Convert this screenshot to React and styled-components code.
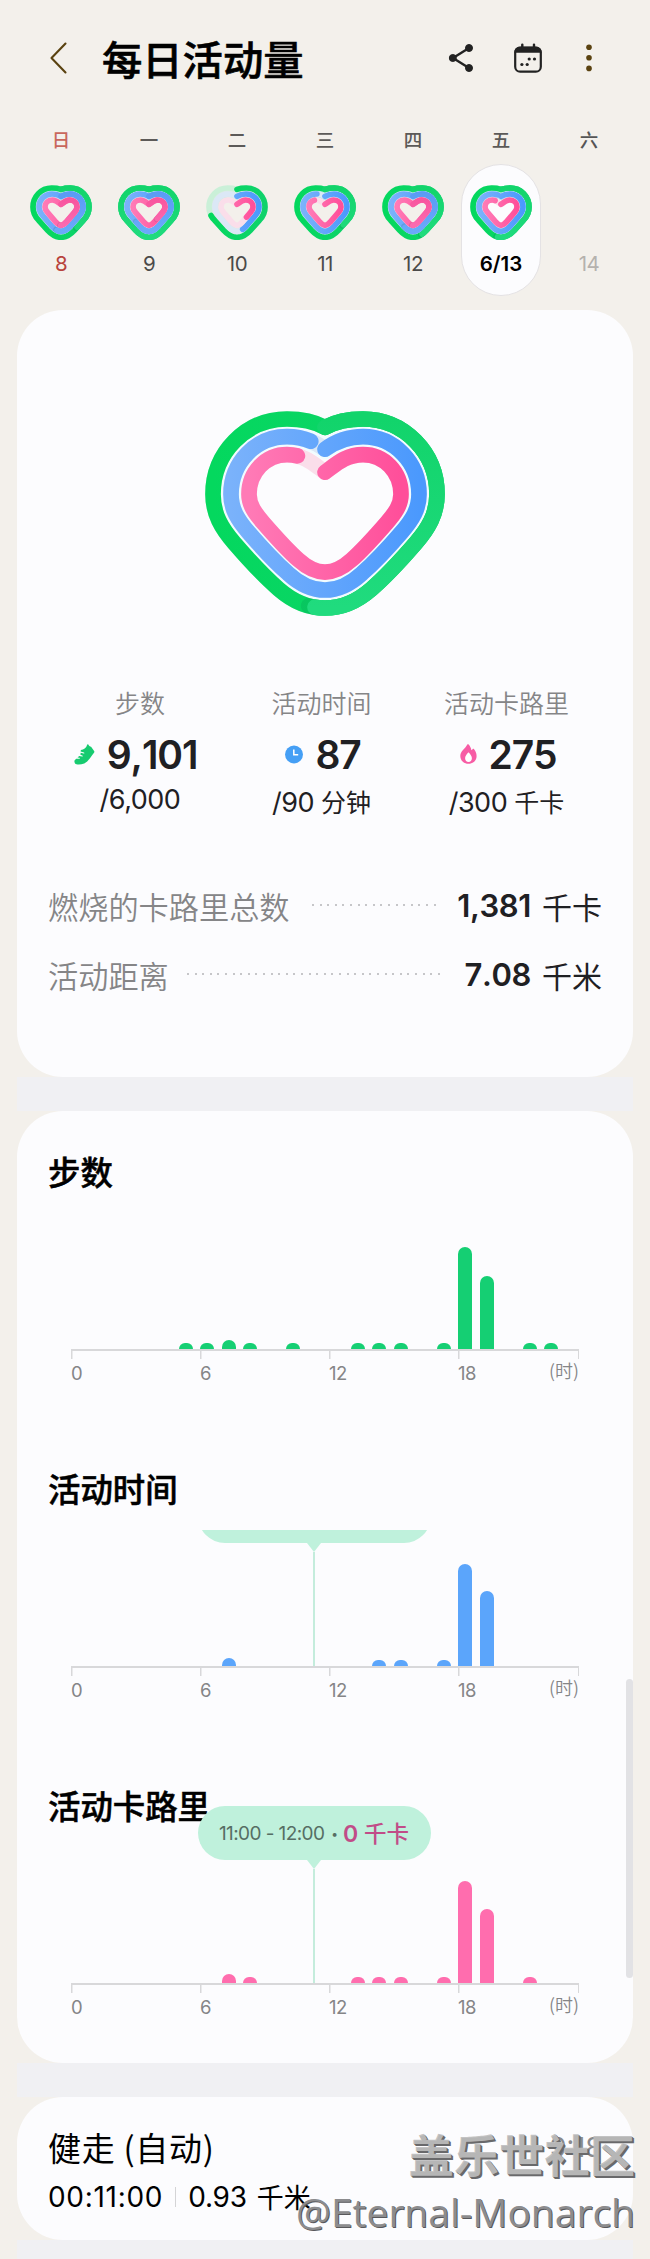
import React from "react";
import styled, { createGlobalStyle } from "styled-components";

const days = [
  { week: "日", date: "8", tone: "sunday", rings: [1.38, 1.53, 1.5] },
  { week: "一", date: "9", rings: [1.99, 1.62, 1.38] },
  { week: "二", date: "10", rings: [0.71, 0.45, 0.36] },
  { week: "三", date: "11", rings: [1.36, 0.93, 0.87] },
  { week: "四", date: "12", rings: [1.44, 1.57, 1.5] },
  { week: "五", date: "6/13", tone: "selected", rings: [1.52, 0.97, 0.92] },
  { week: "六", date: "14", tone: "future" }
];

const charts = [
  {
    title: "步数",
    color: "#15cf73",
    bars: { 5: 6, 6: 6, 7: 9, 8: 6, 10: 6, 13: 6, 14: 6, 15: 6, 17: 6, 18: 102, 19: 73, 21: 6, 22: 6 }
  },
  {
    title: "活动时间",
    color: "#5ba5fb",
    bars: { 7: 8, 14: 6, 15: 6, 17: 6, 18: 102, 19: 75 },
    tip: true,
    clip: true
  },
  {
    title: "活动卡路里",
    color: "#ff6dae",
    bars: { 7: 9, 8: 6, 13: 6, 14: 6, 15: 6, 17: 6, 18: 102, 19: 74, 21: 6 },
    tip: true
  }
];

const bigHeart = {
  viewBox: "46 62 720 616",
  width: 240,
  height: 205,
  stroke: 47,
  shade: 0.1,
  paths: [
    "M406 111C438 94 478 86 520 86C643 86 742 187 742 312C742 372 716 415 678 459C640 503 590 558 545 597C498 638 450 654 406 654C362 654 314 638 267 597C222 558 172 503 134 459C96 415 70 372 70 312C70 187 169 86 292 86C334 86 374 94 406 111",
    "M406 177C440 152 478 139 520 139C613 139 688 216 688 312C688 357 668 389 636 426C600 468 556 516 517 550C480 584 441 600 406 600C371 600 332 584 295 550C256 516 212 468 176 426C144 389 124 357 124 312C124 216 199 139 292 139C334 139 372 152 406 177",
    "M406 246C439 222 468 193 520 193C584 193 634 246 634 312C634 344 617 368 591 398C558 436 520 479 486 509C457 535 432 546 406 546C380 546 355 535 326 509C292 479 254 436 221 398C195 368 178 344 178 312C178 246 228 193 292 193C344 193 373 222 406 246"
  ]
};

const smallHeart = {
  viewBox: "30 44 186 166",
  width: 62,
  height: 55.3,
  stroke: 17,
  shade: 0.14,
  paths: [
    "M123 57C132 54 141 53 151 53C183 53 207 79 207 110C207 128 200 140 190 150L163 180C150 194 138 201 123 201C108 201 96 194 83 180L56 150C46 140 39 128 39 110C39 79 63 53 95 53C105 53 114 54 123 57",
    "M123 78C131 73 140 71 150 71C172 71 189 88 189 110C189 121 184 129 176 138L150 168C141 178 133 183 123 183C113 183 105 178 96 168L70 138C62 129 57 121 57 110C57 88 74 71 96 71C106 71 115 73 123 78",
    "M123 102C131 96 138 89 149 89C162 89 171 98 171 110C171 117 168 121 163 127L138 156C132 162 128 165 123 165C118 165 114 162 108 156L83 127C78 121 75 117 75 110C75 98 84 89 97 89C108 89 115 96 123 102"
  ]
};

const ringColors = [
  { first: ["#04d85e", "#0fd26b"], lap: ["#12d46b", "#20db7e"], track: "#caf0d8" },
  { first: ["#7ab2fb", "#4b99fd"], lap: ["#5a9cf5", "#6aa9fb"], track: "#dbe8f6" },
  { first: ["#ff7ab6", "#ff4f9a"], lap: ["#f8569f", "#fb6aaf"], track: "#fadeea" }
];

function HeartRings({ shape, rings, id, gap }) {
  return (
    <svg
      width={shape.width}
      height={shape.height}
      viewBox={shape.viewBox}
      preserveAspectRatio="none"
      fill="none"
      strokeLinecap="round"
      strokeLinejoin="round"
    >
      <defs>
        {ringColors.map((c, i) => (
          <React.Fragment key={i}>
            <linearGradient id={`${id}-first-${i}`}>
              <stop offset="0" stopColor={c.first[0]} />
              <stop offset="1" stopColor={c.first[1]} />
            </linearGradient>
            <linearGradient id={`${id}-lap-${i}`} x2="0" y2="1">
              <stop offset="0" stopColor={c.lap[0]} />
              <stop offset="1" stopColor={c.lap[1]} />
            </linearGradient>
          </React.Fragment>
        ))}
      </defs>
      {/* the gap colour only shows between two rings */}
      <path d={shape.paths[1]} stroke={gap} strokeWidth={shape.stroke * 1.28} />
      {rings.map((value, i) => {
        const d = shape.paths[i];
        const lap = (value - 1) * 100;
        return (
          <g key={i} strokeWidth={shape.stroke}>
            <path d={d} stroke={ringColors[i].track} />
            <path
              d={d}
              pathLength="100"
              strokeDasharray={value < 1 ? `${value * 100} 200` : "none"}
              stroke={`url(#${id}-first-${i})`}
            />
            {lap > 0 && (
              <>
                {/* soft edge under the tip of the second lap */}
                <path
                  d={d}
                  pathLength="100"
                  strokeDasharray={`1 200`}
                  strokeDashoffset={-lap}
                  stroke="#044"
                  strokeOpacity={shape.shade}
                />
                <path
                  d={d}
                  pathLength="100"
                  strokeDasharray={`${lap} 200`}
                  stroke={`url(#${id}-lap-${i})`}
                />
              </>
            )}
          </g>
        );
      })}
    </svg>
  );
}

function Chart({ title, color, bars, tip, clip }) {
  return (
    <ChartSection>
      <ChartTitle>{title}</ChartTitle>
      <Plot $clip={clip}>
        {Array.from({ length: 24 }, (_, hour) => (
          <Hour key={hour}>{bars[hour] && <Bar $color={color} style={{ height: bars[hour] }} />}</Hour>
        ))}
        {tip && (
          <Tip>
            <Bubble>
              {!clip && (
                <>
                  <TipTime>11:00 - 12:00</TipTime>
                  <TipDot>•</TipDot>
                  <TipValue>
                    0 <span>千卡</span>
                  </TipValue>
                </>
              )}
            </Bubble>
            <TipArrow />
            <TipLine />
          </Tip>
        )}
      </Plot>
      <Axis>
        <Tick>0</Tick>
        <Tick>6</Tick>
        <Tick>12</Tick>
        <Tick $last>
          18 <HourUnit>(时)</HourUnit>
        </Tick>
      </Axis>
    </ChartSection>
  );
}

export default function App() {
  return (
    <Page>
      <GlobalStyle />
      <Header>
        <svg width="18" height="32" viewBox="0 0 18 32" fill="none" stroke="#5a4210" strokeWidth="2.1" strokeLinecap="round" strokeLinejoin="round">
          <path d="M15.5 1.5L1.5 16l14 14.5" />
        </svg>
        <Title>每日活动量</Title>
        <HeaderIcons>
          <svg width="26" height="30" viewBox="0 0 26 30" fill="#222" stroke="#222">
            <path d="M21 5L5 15l16 10" fill="none" strokeWidth="2.4" />
            <circle cx="21" cy="5" r="3.5" />
            <circle cx="4.8" cy="15" r="3.5" />
            <circle cx="21" cy="25" r="3.5" />
          </svg>
          <svg width="28" height="30" viewBox="0 0 28 30" fill="#222">
            <rect x="1.2" y="4.5" width="25.6" height="24.2" rx="5" fill="none" stroke="#222" strokeWidth="2.2" />
            <path d="M.4 9.8V9c0-3 2.2-5.3 5.3-5.3h16.6c3 0 5.3 2.3 5.3 5.3v.8z" />
            <path d="M8.3 1.6V6M20 1.6V6" stroke="#222" strokeWidth="2.4" strokeLinecap="round" />
            <circle cx="15.2" cy="16" r="1.6" />
            <circle cx="20.5" cy="16" r="1.6" />
            <circle cx="7.9" cy="21.5" r="1.6" />
            <circle cx="13.2" cy="21.5" r="1.6" />
          </svg>
          <svg width="6" height="28" viewBox="0 0 6 28" fill="#5a4210">
            <circle cx="3" cy="3.2" r="2.8" />
            <circle cx="3" cy="13.8" r="2.8" />
            <circle cx="3" cy="24.4" r="2.8" />
          </svg>
        </HeaderIcons>
      </Header>

      <Week>
        {days.map(day => (
          <Day key={day.date}>
            <WeekName $tone={day.tone}>{day.week}</WeekName>
            <DayPill $selected={day.tone === "selected"}>
              <DayHeart>
                {day.rings && (
                  <HeartRings
                    shape={smallHeart}
                    rings={day.rings}
                    id={`day-${day.date.replace("/", "-")}`}
                    gap={day.rings[0] < 1 ? "#dcebe3" : "#b4e6ec"}
                  />
                )}
              </DayHeart>
              <DayNumber $tone={day.tone}>{day.date}</DayNumber>
            </DayPill>
          </Day>
        ))}
      </Week>

      <Summary>
        <MainHeart>
          <HeartRings shape={bigHeart} rings={[1.515, 0.969, 0.925]} id="main" gap="#f1fcff" />
        </MainHeart>
        <Stats>
          <Stat>
            <StatLabel>步数</StatLabel>
            <StatValue $shift={-9}>
              <svg width="21" height="21" viewBox="0 0 21 21" fill="#17cb70">
                <path d="M13.4.5c.3-.4.7-.3.9 0 .5 1.3 1.5 1.9 2.8 2.2l3 4.3c.5.7.4 1.2-.1 1.8-3.2 3.6-5.2 8.7-9.8 10.6-2.7 1-5.4 1.2-7.7.8C.6 19.9.2 17.9.5 16.5l1.7-1.8 3.2.1c.7 0 .7-1 0-1.1l-1.9-.2 1.7-1.5 2.9.5c.8.1 1-.9.2-1.1l-1.9-.6.3-2 2.9.8c.8.2 1.1-.9.3-1.1l-3.300-1 .3-1.600c2.900-.2 5.200-1.600 6.400-5.400z" />
              </svg>
              <b>9,101</b>
            </StatValue>
            <StatGoal $plain>/6,000</StatGoal>
          </Stat>
          <Stat>
            <StatLabel>活动时间</StatLabel>
            <StatValue $shift={3}>
              <svg width="18" height="19" viewBox="0 0 18 19">
                <circle cx="9" cy="9.5" r="9" fill="#459ff5" />
                <path d="M8.8 4.5v5.3h4.4" fill="none" stroke="#fff" strokeWidth="1.5" />
              </svg>
              <b>87</b>
            </StatValue>
            <StatGoal>
              /90 <span>分钟</span>
            </StatGoal>
          </Stat>
          <Stat>
            <StatLabel>活动卡路里</StatLabel>
            <StatValue $shift={3}>
              <svg width="17" height="20" viewBox="0 0 17 20">
                <path
                  d="M7.3.4c.5-.4 1-.3 1.4.2C10.1 2.3 11 4 11.4 6.3c.6-.1 1-.6 1.3-1.2.3-.6.8-.6 1.2-.1 1.6 2 2.7 4.3 2.7 6.9 0 4.5-3.6 7.9-8.2 7.9S.3 16.4.3 12C.3 6.9 5.2 4.8 7.3.4z"
                  fill="#f75ca5"
                />
                <path d="M8 8.7c.3-.4.7-.4 1 0 1.5 1.8 2.9 3.5 2.9 5.5 0 2.2-1.5 3.7-3.4 3.7s-3.4-1.5-3.4-3.7c0-2 1.4-3.7 2.9-5.5z" fill="#fff" />
              </svg>
              <b>275</b>
            </StatValue>
            <StatGoal>
              /300 <span>千卡</span>
            </StatGoal>
          </Stat>
        </Stats>
        <Totals>
          <TotalRow>
            <TotalLabel>燃烧的卡路里总数</TotalLabel>
            <Dots $left={22} $right={17} />
            <TotalValue>1,381</TotalValue>
            <TotalUnit>千卡</TotalUnit>
          </TotalRow>
          <TotalRow>
            <TotalLabel>活动距离</TotalLabel>
            <Dots $left={18} $right={21} />
            <TotalValue>7.08</TotalValue>
            <TotalUnit>千米</TotalUnit>
          </TotalRow>
        </Totals>
      </Summary>
      <Strip />
      <ChartsCard>
        {charts.map(chart => (
          <Chart key={chart.title} {...chart} />
        ))}
      </ChartsCard>
      <Strip />
      <Workout>
        <WorkoutTop>
          <WorkoutName>健走 (自动)</WorkoutName>
          <WorkoutTime>9:18</WorkoutTime>
        </WorkoutTop>
        <WorkoutData>
          <Duration>00:11:00</Duration>
          <Divider />
          <span>0.93</span>
          <WorkoutUnit>千米</WorkoutUnit>
        </WorkoutData>
      </Workout>
      <Strip $last />
      <ScrollThumb />
      <Watermark>
        <Community>盖乐世社区</Community>
        <Author>@Eternal-Monarch</Author>
      </Watermark>
    </Page>
  );
}

// Styled Components

const GlobalStyle = createGlobalStyle`
  * {
    box-sizing: border-box;
  }

  body {
    margin: 0;
    background: #f3f0eb;
    font-family: Inter, "Noto Sans CJK SC", sans-serif;
    color: #1f2023;
  }

  svg {
    display: block;
    flex: none;
  }
`;

const Page = styled.main`
  position: relative;
  width: 650px;
  height: 2259px;
  padding: 0 17px;
  overflow: hidden;
`;

const Header = styled.header`
  display: flex;
  align-items: center;
  height: 115px;
  padding: 0 41px 0 33px;
`;

const Title = styled.h1`
  margin: 1px 0 0 34px;
  font: 500 40.3px/60px "Noto Sans CJK SC", sans-serif;
  color: #000;
  -webkit-text-stroke: 0.6px #000;
`;

const HeaderIcons = styled.div`
  display: flex;
  align-items: center;
  margin-left: auto;

  svg + svg {
    margin-left: 40px;
  }

  svg:last-child {
    margin-left: 44px;
  }
`;

const Week = styled.section`
  display: grid;
  grid-template-columns: repeat(7, 88px);
  height: 195px;
`;

const Day = styled.div`
  display: flex;
  flex-direction: column;
  align-items: center;
`;

const tones = { sunday: "#c9675d", future: "#555" };

const WeekName = styled.div`
  height: 49px;
  font: 500 18.5px/49px "Noto Sans CJK SC", sans-serif;
  color: ${({ $tone }) => tones[$tone] || "#5c5a58"};
`;

const DayPill = styled.div`
  width: 80px;
  height: 132px;
  padding-top: 20px;
  border: 1px solid ${({ $selected }) => ($selected ? "#e4e2e4" : "transparent")};
  border-radius: 40px;
  background: ${({ $selected }) => ($selected ? "#fcfcfe" : "transparent")};
  display: flex;
  flex-direction: column;
  align-items: center;
`;

const DayHeart = styled.div`
  height: 55px;
`;

const dateColors = { sunday: "#b8433c", selected: "#000", future: "#b5b2ae" };

const DayNumber = styled.div`
  height: 48px;
  line-height: 48px;
  font-size: 20.5px;
  font-weight: ${({ $tone }) => ($tone === "selected" ? 600 : 400)};
  letter-spacing: ${({ $tone }) => ($tone === "selected" ? 0 : -0.5)}px;
  color: ${({ $tone }) => dateColors[$tone] || "#4b4a49"};
`;

const Card = styled.section`
  border-radius: 46px;
  background: #fcfcfe;
`;

const Strip = styled.div`
  height: ${({ $last }) => ($last ? 19 : 34)}px;
  background: #f0f0f3;
`;

const Summary = styled(Card)`
  height: 767px;
  padding-top: 100.5px;
`;

const MainHeart = styled.div`
  display: flex;
  justify-content: center;
`;

const Stats = styled.div`
  display: grid;
  grid-template-columns: 182px 181px 189px;
  margin: 68.5px 0 0 32px;
`;

const Stat = styled.div`
  display: flex;
  flex-direction: column;
  align-items: center;
`;

const StatLabel = styled.div`
  font: 350 25px/36px "Noto Sans CJK SC", sans-serif;
  color: #858587;
`;

const StatValue = styled.div`
  display: flex;
  align-items: center;
  height: 67px;
  padding-top: 1px;
  padding-left: ${({ $shift }) => Math.max($shift, 0)}px;
  padding-right: ${({ $shift }) => Math.max(-$shift, 0)}px;

  b {
    margin-left: 12px;
    font-size: 39px;
    font-weight: 600;
    font-kerning: none;
    letter-spacing: -1.1px;
  }
`;

const StatGoal = styled.div`
  margin-top: ${({ $plain }) => ($plain ? -3 : 0)}px;
  font-size: 27px;
  line-height: 32px;
  letter-spacing: -0.5px;
  white-space: nowrap;

  span {
    font-size: 25px;
    letter-spacing: 0;
  }
`;

const Totals = styled.div`
  margin: 52px 31px 0;
`;

const TotalRow = styled.div`
  display: flex;
  align-items: center;
  height: 69px;
`;

const TotalLabel = styled.div`
  font: 350 30.2px/40px "Noto Sans CJK SC", sans-serif;
  color: #858587;
`;

const Dots = styled.div`
  flex: 1;
  height: 2px;
  margin: -2px ${({ $right }) => $right}px 0 ${({ $left }) => $left}px;
  background: repeating-linear-gradient(to right, #c6c6c9 0 2px, transparent 2px 7.6px);
`;

const TotalValue = styled.div`
  font-size: 31px;
  font-weight: 600;
  font-kerning: none;
  letter-spacing: -0.4px;
`;

const TotalUnit = styled.div`
  margin-left: 11px;
  font: 400 30px/40px "Noto Sans CJK SC", sans-serif;
`;

const ChartsCard = styled(Card)`
  height: 952px;
  padding: 35.5px 54px 0;
`;

const ChartSection = styled.div`
  height: 317.2px;
`;

const ChartTitle = styled.h2`
  margin: 0 0 0 -23px;
  font: 500 32.4px/48px "Noto Sans CJK SC", sans-serif;
  color: #000;
  -webkit-text-stroke: 0.5px #000;
`;

const Plot = styled.div`
  position: relative;
  display: grid;
  grid-template-columns: repeat(24, 21.5px);
  align-items: end;
  width: 508px;
  height: 136px;
  margin-top: 18.5px;
  overflow: ${({ $clip }) => ($clip ? "hidden" : "visible")};
`;

const Hour = styled.div`
  display: flex;
`;

const Bar = styled.div`
  width: 14px;
  border-radius: 7px 7px 0 0;
  background: ${({ $color }) => $color};
`;

const Axis = styled.div`
  display: grid;
  grid-template-columns: 129px 129px 129px 121px;
  width: 508px;
  border-top: 2px solid #d8d8da;
`;

const Tick = styled.div`
  display: flex;
  justify-content: space-between;
  height: 32px;
  padding-top: 10px;
  font-size: 18.5px;
  line-height: 24px;
  letter-spacing: -0.5px;
  color: #858587;
  background:
    linear-gradient(#d8d8da, #d8d8da) left top / 1.5px 8px no-repeat,
    linear-gradient(#d8d8da, #d8d8da) right top / ${({ $last }) => ($last ? 1.5 : 0)}px 8px no-repeat;
`;

const HourUnit = styled.span`
  font: 350 18px/19px "Noto Sans CJK SC", sans-serif;
  letter-spacing: 0;
`;

const Tip = styled.div`
  position: absolute;
  left: 126px;
  bottom: 0;
  width: 234px;
  height: 177.5px;
  display: flex;
  flex-direction: column;
  align-items: center;
`;

const Bubble = styled.div`
  display: flex;
  align-items: center;
  justify-content: center;
  width: 233px;
  height: 54px;
  padding-top: 2px;
  border-radius: 27px;
  background: #bff1dc;
  white-space: nowrap;
`;

const TipTime = styled.span`
  font-size: 19px;
  letter-spacing: -0.6px;
  color: #566e64;
`;

const TipDot = styled.span`
  margin: 0 5px 0 7px;
  font-size: 12px;
  color: #566e64;
`;

const TipValue = styled.span`
  font-size: 23px;
  font-weight: 600;
  line-height: 30px;
  color: #c14c88;

  span {
    font-size: 22.5px;
    font-weight: 500;
  }
`;

const TipArrow = styled.div`
  border: 7px solid transparent;
  border-top: 9px solid #bff1dc;
  border-bottom: 0;
`;

const TipLine = styled.div`
  flex: 1;
  width: 2px;
  background: #c4ecdc;
`;

const Workout = styled(Card)`
  height: 143px;
  padding: 26px 31px 0 31px;
`;

const WorkoutTop = styled.div`
  display: flex;
  align-items: center;
  justify-content: space-between;
  height: 48px;
`;

const WorkoutName = styled.h3`
  margin: 0;
  font: 400 33px/48px "Noto Sans CJK SC", sans-serif;
  letter-spacing: 0.7px;
  color: #000;
`;

const WorkoutTime = styled.span`
  font-size: 27px;
  color: #8a8a8d;
`;

const WorkoutData = styled.div`
  display: flex;
  align-items: center;
  height: 51px;
  font-size: 28px;
  letter-spacing: -0.2px;
  color: #000;
`;

const Duration = styled.span`
  letter-spacing: 0.7px;
`;

const Divider = styled.i`
  width: 1px;
  height: 20px;
  margin: 0 12px;
  background: #d4d4d6;
`;

const WorkoutUnit = styled.span`
  margin-left: 10px;
  font: 400 27px/40px "Noto Sans CJK SC", sans-serif;
  letter-spacing: 0;
`;

const ScrollThumb = styled.div`
  position: absolute;
  top: 1679px;
  right: 17px;
  width: 7px;
  height: 299px;
  border-radius: 4px;
  background: #e2e2e5;
`;

const Watermark = styled.div`
  position: absolute;
  right: 15px;
  bottom: 20px;
  display: flex;
  flex-direction: column;
  align-items: flex-end;
  white-space: nowrap;
`;

const Community = styled.div`
  font: 700 45.3px/60px "Noto Sans CJK SC", sans-serif;
  color: rgba(190, 190, 190, 0.92);
  text-shadow: 1px 1px 0 #69696b, 2px 2px 0 #69696b;
`;

const Author = styled.div`
  margin-top: 2px;
  font: 400 39px/54px "Open Sans", sans-serif;
  color: #8c8c8e;
  text-shadow: 1px 1px 0 #58585b;
`;
